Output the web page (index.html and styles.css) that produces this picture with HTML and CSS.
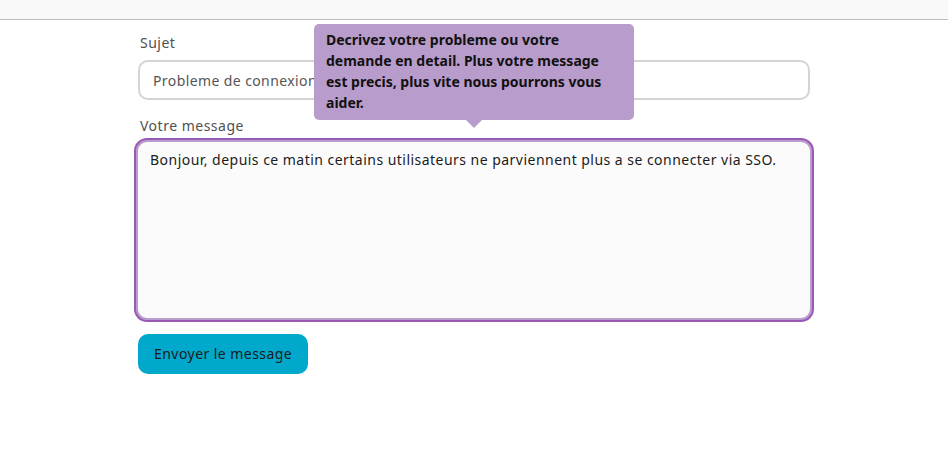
FILE: index.html
```html
<!DOCTYPE html>
<html lang="fr">
<head>
<meta charset="utf-8">
<link rel="stylesheet" href="styles.css">
</head>
<body>
<header class="topbar"></header>
<main class="page">
  <form class="form">
    <label class="label" for="sujet">Sujet</label>
    <input class="input" id="sujet" type="text" value="Probleme de connexion SSO">
    <label class="label label-msg" for="msg">Votre message</label>
    <textarea class="textarea" id="msg">Bonjour, depuis ce matin certains utilisateurs ne parviennent plus a se connecter via SSO.</textarea>
    <button class="btn" type="button">Envoyer le message</button>
    <div class="tooltip">Decrivez votre probleme ou votre demande en detail. Plus votre message est precis, plus vite nous pourrons vous aider.</div>
  </form>
</main>
</body>
</html>
```
FILE: styles.css
```css
html, body {
  margin: 0;
  padding: 0;
  background: #ffffff;
}
body {
  font-family: "Noto Sans", "Open Sans", sans-serif;
  font-size: 14px;
  color: #222;
}
.topbar {
  height: 19px;
  background: #f9f9f9;
  border-bottom: 1px solid #bdbdbd;
}
.page {
  width: 676px;
  margin: 0 auto;
}
.form {
  position: relative;
  display: flex;
  flex-direction: column;
  align-items: flex-start;
  padding-top: 13px;
}
.label {
  display: block;
  line-height: 20px;
  color: #505050;
  margin-left: 4px;
  letter-spacing: 0.5px;
}
.input {
  box-sizing: border-box;
  margin: 7px 0 0 2px;
  width: 672px;
  height: 40px;
  border: 2px solid #d4d4d4;
  border-radius: 10px;
  padding: 0 13px;
  font: inherit;
  color: #555;
  letter-spacing: 0.4px;
  background: #fff;
  outline: none;
}
.label-msg {
  margin-top: 16px;
}
.textarea {
  box-sizing: border-box;
  margin-top: 4px;
  width: 676px;
  height: 180px;
  border: 2px solid #b99dcc;
  box-shadow: 0 0 0 2px #9b59b6;
  border-radius: 11px;
  padding: 8px 12px;
  font: inherit;
  letter-spacing: 0.47px;
  color: #1c1c1c;
  background: #fbfbfb;
  resize: none;
  outline: none;
}
.btn {
  margin: 14px 0 0 2px;
  height: 40px;
  padding: 0 16px 2px;
  border: none;
  border-radius: 10px;
  background: #00a9cc;
  color: #1a1a1a;
  font: inherit;
  letter-spacing: 0.45px;
}
.tooltip {
  position: absolute;
  left: 178px;
  top: 4px;
  box-sizing: border-box;
  width: 320px;
  height: 96px;
  padding: 5px 12px;
  background: #b89ccb;
  border-radius: 5px;
  color: #111;
  font-weight: 700;
  line-height: 21px;
}
.tooltip::after {
  content: "";
  position: absolute;
  left: 152px;
  bottom: -8px;
  border-left: 8px solid transparent;
  border-right: 8px solid transparent;
  border-top: 8px solid #b89ccb;
}
```
